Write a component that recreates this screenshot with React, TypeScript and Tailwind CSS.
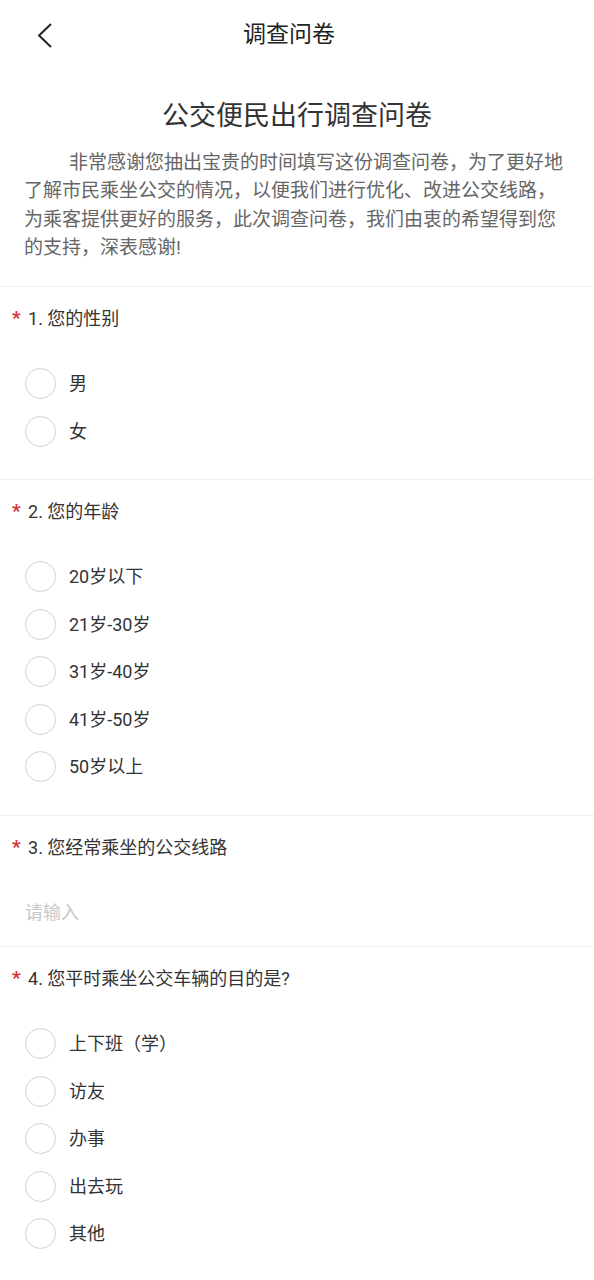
import { useState } from 'react';

const font = { fontFamily: 'Roboto, "Noto Sans CJK SC", "Noto Sans", sans-serif' };

type Question =
  | { id: number; title: string; kind: 'radio'; options: string[] }
  | { id: number; title: string; kind: 'input' };

const questions: Question[] = [
  { id: 1, title: '您的性别', kind: 'radio', options: ['男', '女'] },
  {
    id: 2,
    title: '您的年龄',
    kind: 'radio',
    options: ['20岁以下', '21岁-30岁', '31岁-40岁', '41岁-50岁', '50岁以上'],
  },
  { id: 3, title: '您经常乘坐的公交线路', kind: 'input' },
  {
    id: 4,
    title: '您平时乘坐公交车辆的目的是?',
    kind: 'radio',
    options: ['上下班（学）', '访友', '办事', '出去玩', '其他'],
  },
];

function QuestionTitle({ id, title }: { id: number; title: string }) {
  return (
    <div className="flex items-center pl-[12px] pt-[20px] text-[18px] leading-[24px] text-[#333]">
      <span className="w-[16px] text-[19px] font-bold leading-[24px] text-[#d8303c] -mt-[2px]">*</span>
      <span>
        {id}. {title}
      </span>
    </div>
  );
}

export default function App() {
  const [answers, setAnswers] = useState<Record<number, string>>({});

  return (
    <div className="min-h-[1280px] w-[594px] bg-white" style={font}>
      <header className="flex h-[74px] items-center">
        <div className="flex w-[76px] pl-[36px] -mt-[2px]">
          <svg width="18" height="28" viewBox="0 0 18 28" fill="none">
            <polyline points="15,2 3,13.5 15,25" stroke="#222" strokeWidth="2" />
          </svg>
        </div>
        <h1 className="flex-1 -mt-[3px] text-center text-[23px] text-[#222]">调查问卷</h1>
        <div className="w-[92px]" />
      </header>

      <div className="px-[24px] pb-[24px] pt-[24px]">
        <h2 className="text-center text-[27px] leading-[36px] text-[#333]">公交便民出行调查问卷</h2>
        <p className="mt-[15px] indent-[45px] text-[19px] leading-[28.3px] text-[#666]">
          非常感谢您抽出宝贵的时间填写这份调查问卷，为了更好地了解市民乘坐公交的情况，以便我们进行优化、改进公交线路，为乘客提供更好的服务，此次调查问卷，我们由衷的希望得到您的支持，深表感谢!
        </p>
      </div>

      {questions.map((q) => (
        <section key={q.id} className="border-t border-[#efefef]">
          <QuestionTitle id={q.id} title={q.title} />
          {q.kind === 'radio' ? (
            <div className="mt-[29px] pb-[24px]">
              {q.options.map((opt) => (
                <label
                  key={opt}
                  className="flex h-[47.5px] cursor-pointer items-center pl-[25px]"
                  onClick={() => setAnswers((a) => ({ ...a, [q.id]: opt }))}
                >
                  <span className="flex h-[31px] w-[31px] items-center justify-center rounded-full border border-[#d2d2d2]">
                    {answers[q.id] === opt && <span className="h-[15px] w-[15px] rounded-full bg-[#d8303c]" />}
                  </span>
                  <span className="ml-[13px] text-[18px] text-[#333]">{opt}</span>
                </label>
              ))}
            </div>
          ) : (
            <div className="mt-[29px] pb-[10px]">
              <input
                className="h-[47.5px] w-full px-[25px] text-[18px] text-[#333] outline-none placeholder:text-[#c8c8c8]"
                placeholder="请输入"
              />
            </div>
          )}
        </section>
      ))}
    </div>
  );
}
